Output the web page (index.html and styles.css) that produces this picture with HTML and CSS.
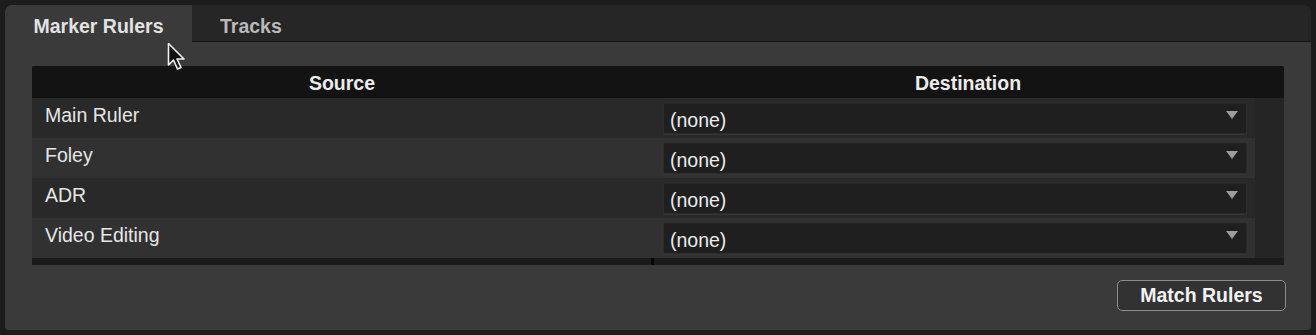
FILE: index.html
```html
<!DOCTYPE html>
<html lang="en">
<head>
  <meta charset="UTF-8">
  <title>Marker Rulers</title>
  <link rel="stylesheet" href="styles.css">
</head>
<body>
  <div class="window">
    <!-- tab strip -->
    <div class="tabs">
      <div class="tab active">Marker Rulers</div>
      <div class="tab">Tracks</div>
    </div>

    <div class="panel">
      <div class="table">
        <div class="thead">
          <div class="th">Source</div>
          <div class="th">Destination</div>
        </div>

        <div class="row dark">
          <div class="src">Main Ruler</div>
          <div class="dst"><div class="select">(none)<span class="caret"></span></div></div>
          <div class="gutter"></div>
        </div>
        <div class="row light">
          <div class="src">Foley</div>
          <div class="dst"><div class="select">(none)<span class="caret"></span></div></div>
          <div class="gutter"></div>
        </div>
        <div class="row dark">
          <div class="src">ADR</div>
          <div class="dst"><div class="select">(none)<span class="caret"></span></div></div>
          <div class="gutter"></div>
        </div>
        <div class="row light">
          <div class="src">Video Editing</div>
          <div class="dst"><div class="select">(none)<span class="caret"></span></div></div>
          <div class="gutter"></div>
        </div>

        <div class="tfoot"><span class="tick"></span></div>
      </div>

      <div class="actions">
        <button class="btn">Match Rulers</button>
      </div>
    </div>

    <svg class="cursor" width="20" height="30" viewBox="0 0 20 30">
      <path d="M1.5 1.5 L1.5 23 L6.5 18 L10.5 27 L14 25.5 L10 17 L17 17 Z" fill="#111" stroke="#f2f2f2" stroke-width="1.6" stroke-linejoin="round"/>
    </svg>
  </div>
</body>
</html>
```
FILE: styles.css
```css
body {
  margin: 0;
  padding: 5px 5px 0 5px;
  background: #1c1c1c;
  font-family: 'Liberation Sans', Arial, sans-serif;
  color: #e6e6e6;
}
.window {
  position: relative;
  width: 1306px;
}
.tabs {
  display: flex;
  height: 37px;
  background: #262626;
  border-radius: 7px 7px 0 0;
  border-bottom: 1px solid #151515;
  box-sizing: border-box;
}
.tab {
  width: 187px;
  padding-top: 6px;
  box-sizing: border-box;
  display: flex;
  align-items: center;
  justify-content: center;
  font-size: 19.5px;
  font-weight: bold;
  color: #b9b9b9;
}
.tab.active {
  background: #3a3a3a;
  color: #e2e2e2;
  border-radius: 7px 0 0 0;
  margin-bottom: -1px;
}
.tab + .tab {
  width: auto;
  padding-left: 28px;
}
.panel {
  background: #3a3a3a;
  height: 288px;
  padding: 24px 26px 0 27px;
  box-sizing: border-box;
  border-radius: 0 0 4px 4px;
}
.table {
  width: 1252px;
  background: #232323;
}
.thead {
  display: grid;
  grid-template-columns: 620px 632px;
  height: 32px;
  background: #131313;
  border-radius: 3px 3px 0 0;
}
.th {
  display: flex;
  align-items: center;
  justify-content: center;
  padding-top: 3px;
  font-size: 19.5px;
  font-weight: bold;
  color: #ececec;
}
.row {
  display: grid;
  grid-template-columns: 620px 603px 29px;
  height: 40px;
}
.row.dark { background: #292929; }
.row.light { background: #313131; }
.src {
  padding: 6px 0 0 13px;
  font-size: 19.5px;
  line-height: 22px;
}
.dst {
  padding: 4px 0 0 11px;
}
.gutter {
  background: #252525;
}
.select {
  position: relative;
  width: 584px;
  height: 32px;
  box-sizing: border-box;
  background: #1f1f1f;
  border: 1px solid #2c2c2c;
  box-shadow: inset 0 1px 0 #262626, 0 1px 1px #383838;
  border-radius: 2px;
  padding: 6px 0 0 6px;
  font-size: 19.5px;
  line-height: 22px;
  color: #ececec;
}
.caret {
  position: absolute;
  right: 8px;
  top: 8px;
  width: 0;
  height: 0;
  border-left: 6px solid transparent;
  border-right: 6px solid transparent;
  border-top: 8px solid #9c9c9c;
}
.tfoot {
  position: relative;
  height: 7px;
  background: #1b1b1b;
}
.tick {
  position: absolute;
  left: 619px;
  top: 0;
  width: 3px;
  height: 7px;
  background: #050505;
}
.actions {
  display: flex;
  justify-content: flex-end;
  margin-top: 15px;
}
.btn {
  width: 169px;
  height: 31px;
  margin-right: -1px;
  background: #323232;
  border: 1.5px solid #8c8c8c;
  border-radius: 5px;
  font-family: 'Liberation Sans', Arial, sans-serif;
  font-size: 19.5px;
  font-weight: bold;
  color: #f2f2f2;
  padding: 0;
}
.cursor {
  position: absolute;
  left: 162px;
  top: 37px;
}
```
